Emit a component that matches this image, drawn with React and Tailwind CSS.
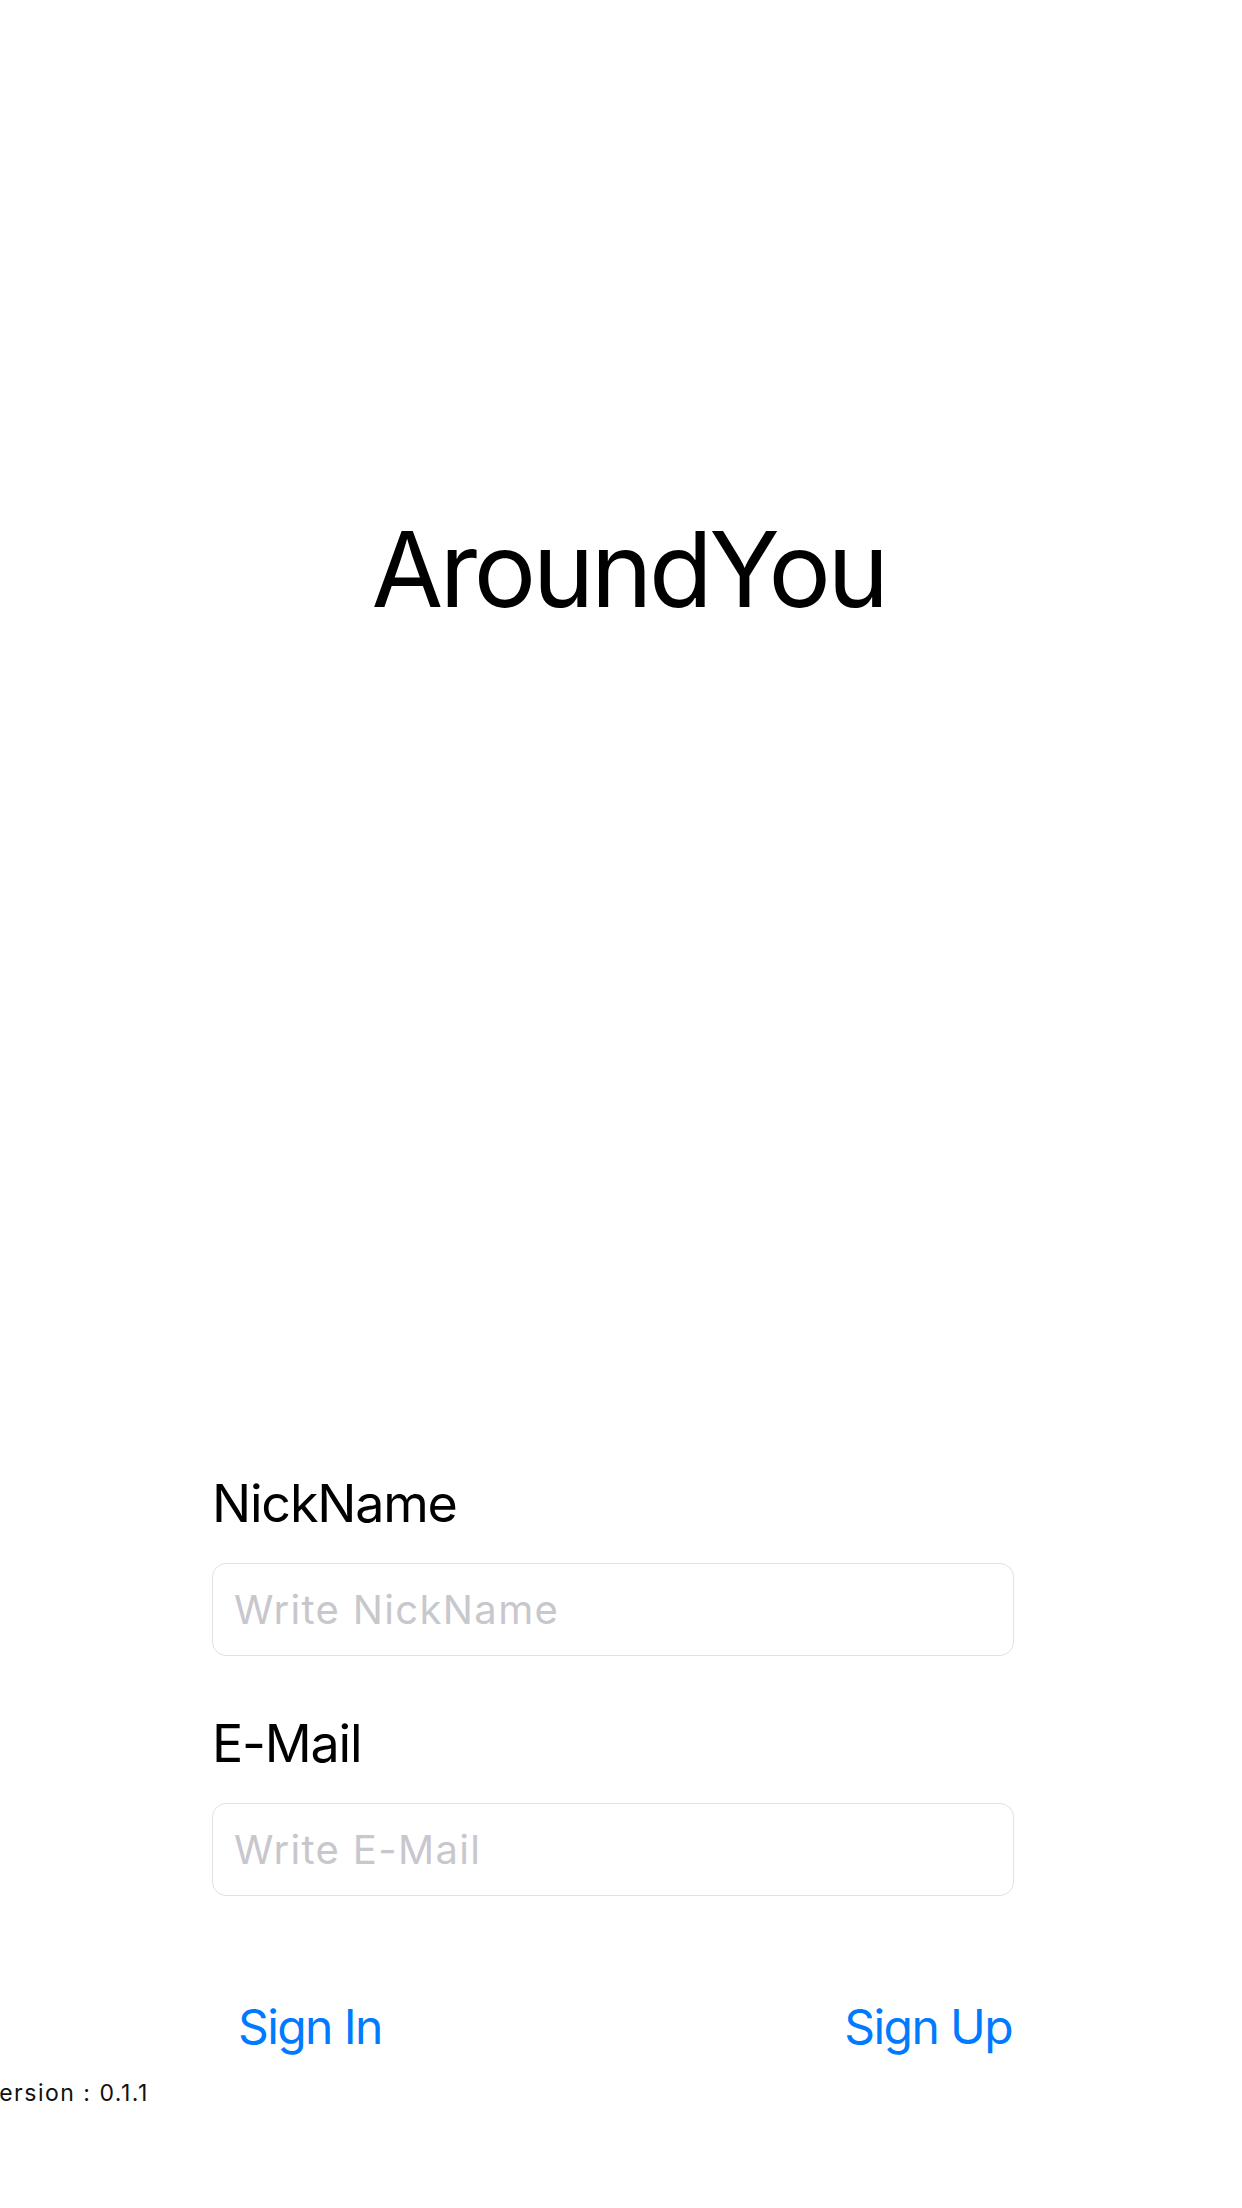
export default function App() {
  const font = { fontFamily: 'Inter, "Liberation Sans", Arial, sans-serif' };
  return (
    <div className="w-[1242px] h-[2208px] bg-white overflow-hidden flex flex-col" style={font}>
      <div className="pt-[517px] flex justify-center pl-[15px]">
        <h1 className="text-[104px] leading-none font-normal text-black tracking-[-3.4px]">AroundYou</h1>
      </div>
      <div className="mt-[857px] ml-[212px] w-[802px] flex flex-col">
        <label className="text-[52px] leading-none text-black tracking-[-1.2px]">NickName</label>
        <div className="mt-[33px] h-[93px] border border-[#e2e2e2] rounded-[14px] flex items-center pl-[21px]">
          <span className="text-[40px] leading-none text-[#c7c7cd] tracking-[1.35px]">Write NickName</span>
        </div>
        <label className="mt-[62px] text-[52px] leading-none text-black tracking-[-1.2px]">E-Mail</label>
        <div className="mt-[33px] h-[93px] border border-[#e2e2e2] rounded-[14px] flex items-center pl-[21px]">
          <span className="text-[40px] leading-none text-[#c7c7cd] tracking-[1.35px]">Write E-Mail</span>
        </div>
        <div className="mt-[107px] flex justify-between pl-[26px] pr-[2px]">
          <button className="text-[48px] leading-none text-[#007aff] tracking-[-1.6px]">Sign In</button>
          <button className="text-[48px] leading-none text-[#007aff] tracking-[-1.6px]">Sign Up</button>
        </div>
      </div>
      <div className="mt-[31px] ml-[-17px] text-[23px] leading-none text-[#111] tracking-[1.5px]">Version : 0.1.1</div>
    </div>
  );
}
